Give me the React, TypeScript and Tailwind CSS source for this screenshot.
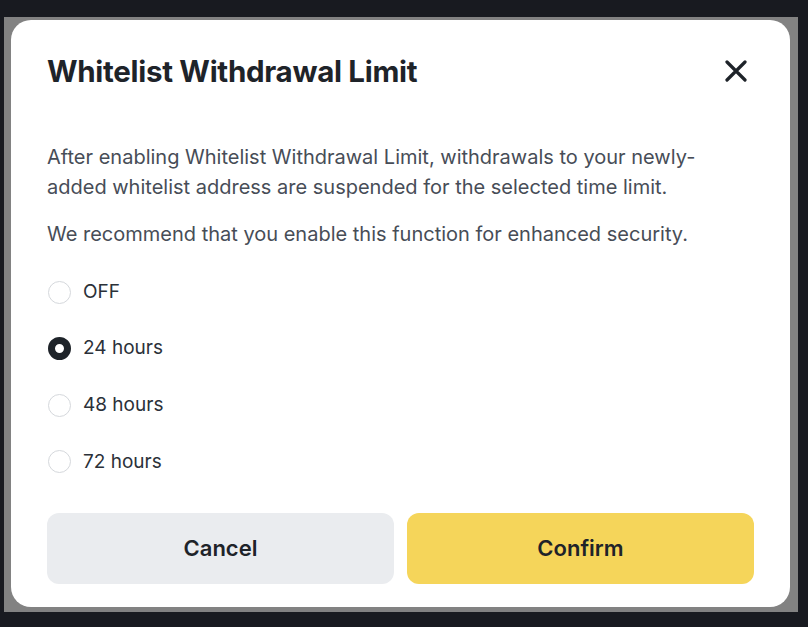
import React, { useState } from 'react';

const options = ['OFF', '24 hours', '48 hours', '72 hours'];

const CloseIcon = () => (
  <svg width="22" height="22" viewBox="0 0 22 22" fill="none">
    <path d="M2 2 L20 20 M20 2 L2 20" stroke="#1e2329" strokeWidth="3.2" strokeLinecap="round" />
  </svg>
);

const Radio: React.FC<{ checked: boolean }> = ({ checked }) =>
  checked ? (
    <span className="block w-[23px] h-[23px] rounded-full border-[7.5px] border-[#1e2329] bg-white" />
  ) : (
    <span className="block w-[23px] h-[23px] rounded-full border-[1.5px] border-[#d5d8dc] bg-white" />
  );

export default function App() {
  const [limit, setLimit] = useState('24 hours');

  return (
    <div
      className="w-[808px] h-[627px] bg-[#181a20] pt-[17px] pl-[4px] overflow-hidden"
      style={{ fontFamily: 'Inter, "Noto Sans", "Liberation Sans", sans-serif' }}
    >
      <div className="w-[794px] h-[595px] bg-[#828282] pt-[3px] pl-[7px]">
        <div className="w-[779px] h-[587px] bg-white rounded-[20px] px-9 pt-[34px] pb-[23px] flex flex-col">
          {/* Header */}
          <div className="flex items-center justify-between h-[34px]">
            <h2 className="text-[29.5px] leading-[34px] font-bold text-[#1e2329] tracking-[-0.3px]">
              Whitelist Withdrawal Limit
            </h2>
            <button className="mr-[7px] text-[#1e2329]">
              <CloseIcon />
            </button>
          </div>

          {/* Description */}
          <div className="mt-[54px] text-[20px] leading-[30px] text-[#474d57]">
            <p>
              After enabling Whitelist Withdrawal Limit, withdrawals to your newly-added whitelist address are
              suspended for the selected time limit.
            </p>
            <p className="mt-[17px]">We recommend that you enable this function for enhanced security.</p>
          </div>

          {/* Options */}
          <div className="mt-[28px] flex flex-col gap-[26.6px]">
            {options.map((opt) => (
              <label
                key={opt}
                className="flex items-center h-[30px] cursor-pointer"
                onClick={() => setLimit(opt)}
              >
                <span className="ml-[1px]">
                  <Radio checked={limit === opt} />
                </span>
                <span className="ml-[12px] text-[19px] text-[#2b3139]">{opt}</span>
              </label>
            ))}
          </div>

          {/* Actions */}
          <div className="mt-auto flex gap-[13px]">
            <button className="flex-1 h-[71px] rounded-[12px] bg-[#eaecef] text-[22px] font-semibold text-[#1e2329]">
              Cancel
            </button>
            <button className="flex-1 h-[71px] rounded-[12px] bg-[#f5d55a] text-[22px] font-semibold text-[#1e2329]">
              Confirm
            </button>
          </div>
        </div>
      </div>
    </div>
  );
}
